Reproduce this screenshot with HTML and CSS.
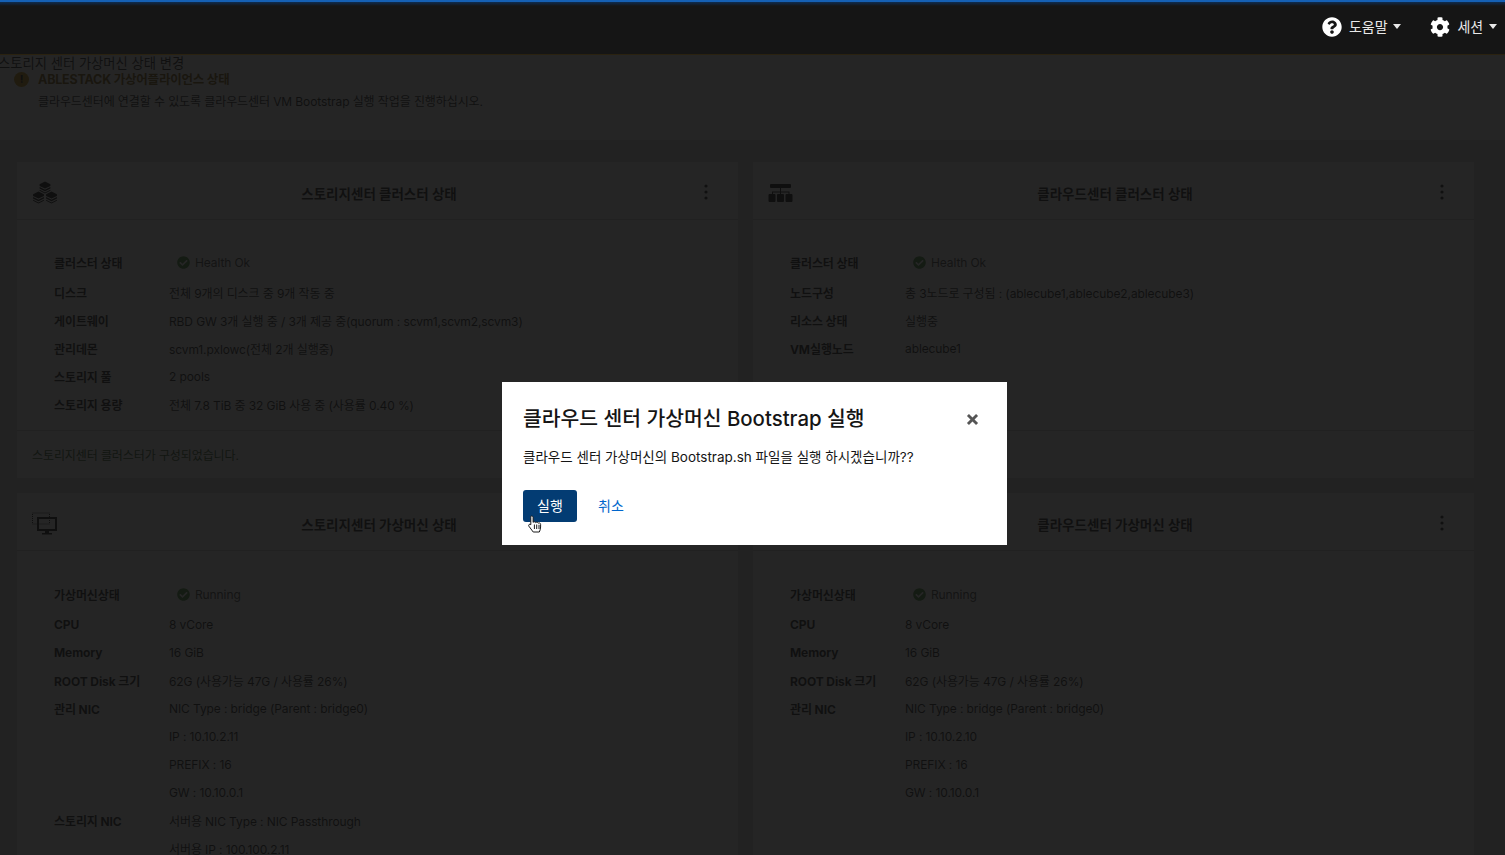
FILE: index.html
```html
<!DOCTYPE html>
<html lang="ko">
<head>
    <meta charset="UTF-8">
    <meta name="viewport" content="width=device-width, initial-scale=1.0">
    <title>ABLESTACK</title>
    <link rel="stylesheet" href="styles.css">
</head>
<body>
    <svg class="icon-defs" xmlns="http://www.w3.org/2000/svg">
        <symbol id="i-check" viewBox="0 0 512 512">
            <path d="M504 256c0 137-111 248-248 248S8 393 8 256 119 8 256 8s248 111 248 248zM227.3 387.3l184-184c6.200-6.200 6.200-16.400 0-22.600l-22.600-22.600c-6.200-6.200-16.400-6.200-22.600 0L216 308.100l-70.100-70.100c-6.200-6.200-16.400-6.200-22.600 0l-22.600 22.600c-6.200 6.200-6.200 16.400 0 22.600l104 104c6.200 6.200 16.400 6.200 22.600 0z"/>
        </symbol>
        <symbol id="i-kebab" viewBox="0 0 4 16">
            <circle cx="2" cy="2" r="1.600"/>
            <circle cx="2" cy="8" r="1.600"/>
            <circle cx="2" cy="14" r="1.600"/>
        </symbol>
        <symbol id="i-cube" viewBox="0 0 24 24">
            <path d="M12 1l10 5v3l-10 5L2 9V6z"/>
            <path d="M2 11l10 5 10-5v3l-10 5-10-5z"/>
            <path d="M2 16l10 5 10-5v2l-10 5-10-5z"/>
        </symbol>
    </svg>

    <header class="topbar">
        <div class="topbar-item">
            <svg class="topbar-icon" viewBox="0 0 512 512"><path d="M504 256c0 136.997-111.043 248-248 248S8 392.997 8 256C8 119.083 119.043 8 256 8s248 111.083 248 248zM262.655 90c-54.497 0-89.255 22.957-116.549 63.758-3.536 5.286-2.353 12.415 2.715 16.258l34.699 26.31c5.205 3.947 12.621 3.008 16.665-2.122 17.864-22.658 30.113-35.797 57.303-35.797 20.429 0 45.698 13.148 45.698 32.958 0 14.976-12.363 22.667-32.534 33.976C247.128 238.528 216 254.941 216 296v4c0 6.627 5.373 12 12 12h56c6.627 0 12-5.373 12-12v-1.333c0-28.462 83.186-29.647 83.186-106.667 0-58.002-60.165-102-116.531-102zM256 338c-25.365 0-46 20.635-46 46 0 25.364 20.635 46 46 46s46-20.636 46-46c0-25.365-20.635-46-46-46z"/></svg>
            <span>도움말</span>
            <i class="caret"></i>
        </div>
        <div class="topbar-item">
            <svg class="topbar-icon" viewBox="0 0 512 512"><path d="M487.4 315.7l-42.6-24.6c4.3-23.2 4.3-47 0-70.2l42.6-24.6c4.9-2.8 7.1-8.6 5.5-14-11.1-35.6-30-67.8-54.7-94.6-3.8-4.1-10-5.1-14.8-2.3L380.8 110c-17.900-15.400-38.500-27.300-60.800-35.100V25.800c0-5.600-3.900-10.500-9.400-11.700-36.700-8.200-74.300-7.800-109.200 0-5.500 1.200-9.400 6.100-9.400 11.700V75c-22.200 7.900-42.800 19.800-60.800 35.100L88.700 85.500c-4.900-2.800-11-1.900-14.800 2.300-24.700 26.700-43.600 58.900-54.700 94.600-1.700 5.400.6 11.200 5.500 14L67.300 221c-4.300 23.200-4.300 47 0 70.200l-42.600 24.600c-4.900 2.800-7.100 8.600-5.500 14 11.100 35.600 30 67.800 54.700 94.600 3.800 4.100 10 5.100 14.800 2.300l42.600-24.600c17.900 15.400 38.500 27.300 60.800 35.100v49.200c0 5.600 3.900 10.500 9.400 11.700 36.700 8.200 74.300 7.800 109.200 0 5.500-1.200 9.400-6.100 9.400-11.700v-49.200c22.200-7.900 42.800-19.800 60.800-35.100l42.600 24.600c4.900 2.800 11 1.900 14.800-2.300 24.700-26.700 43.600-58.900 54.700-94.600 1.500-5.500-.7-11.300-5.600-14.100zM256 336c-44.100 0-80-35.900-80-80s35.900-80 80-80 80 35.900 80 80-35.900 80-80 80z"/></svg>
            <span>세션</span>
            <i class="caret"></i>
        </div>
    </header>

    <main class="page">
        <section class="status-section">
            <div class="section-title">스토리지 센터 가상머신 상태 변경</div>
            <div class="alert">
                <span class="alert-icon">!</span>
                <div>
                    <div class="alert-title">ABLESTACK 가상어플라이언스 상태</div>
                    <div class="alert-desc">클라우드센터에 연결할 수 있도록 클라우드센터 VM Bootstrap 실행 작업을 진행하십시오.</div>
                </div>
            </div>
        </section>

        <section class="cards">
            <div class="card">
                <div class="card-head">
                    <svg class="card-icon" viewBox="0 0 26 24">
                        <use href="#i-cube" x="6.500" y="0" width="13" height="13"/>
                        <use href="#i-cube" x="0" y="10" width="13" height="13"/>
                        <use href="#i-cube" x="13" y="10" width="13" height="13"/>
                    </svg>
                    <h2>스토리지센터 클러스터 상태</h2>
                    <svg class="kebab"><use href="#i-kebab"/></svg>
                </div>
                <div class="card-body">
                    <div class="row row-status"><b>클러스터 상태</b><span class="status"><svg><use href="#i-check"/></svg>Health Ok</span></div>
                    <div class="row"><b>디스크</b><span>전체 9개의 디스크 중 9개 작동 중</span></div>
                    <div class="row"><b>게이트웨이</b><span>RBD GW 3개 실행 중 / 3개 제공 중(quorum : scvm1,scvm2,scvm3)</span></div>
                    <div class="row"><b>관리데몬</b><span>scvm1.pxlowc(전체 2개 실행중)</span></div>
                    <div class="row"><b>스토리지 풀</b><span>2 pools</span></div>
                    <div class="row"><b>스토리지 용량</b><span>전체 7.8 TiB 중 32 GiB 사용 중 (사용률 0.40 %)</span></div>
                </div>
                <div class="card-foot">스토리지센터 클러스터가 구성되었습니다.</div>
            </div>

            <div class="card">
                <div class="card-head">
                    <svg class="card-icon" viewBox="0 0 26 24">
                        <rect x="2" y="3" width="21" height="4" rx="1"/>
                        <path d="M12 7h1v3.500h8.500V14h-1v-2.500H13V14h-1v-2.500H5V14H4v-3.500h8z"/>
                        <rect x="0.500" y="13" width="7" height="8" rx="1"/>
                        <rect x="9" y="13" width="7" height="8" rx="1"/>
                        <rect x="17.500" y="13" width="7" height="8" rx="1"/>
                    </svg>
                    <h2>클라우드센터 클러스터 상태</h2>
                    <svg class="kebab"><use href="#i-kebab"/></svg>
                </div>
                <div class="card-body">
                    <div class="row row-status"><b>클러스터 상태</b><span class="status"><svg><use href="#i-check"/></svg>Health Ok</span></div>
                    <div class="row"><b>노드구성</b><span>총 3노드로 구성됨 : (ablecube1,ablecube2,ablecube3)</span></div>
                    <div class="row"><b>리소스 상태</b><span>실행중</span></div>
                    <div class="row"><b>VM실행노드</b><span>ablecube1</span></div>
                </div>
                <div class="card-foot"></div>
            </div>

            <div class="card">
                <div class="card-head">
                    <svg class="card-icon" viewBox="0 0 26 24">
                        <rect class="dotted" x="0.500" y="1" width="17" height="11"/>
                        <path fill-rule="evenodd" d="M5 5h20v14h-8v2h3v1.500H10V21h3v-2H5zM7 7v10h16V7z"/>
                    </svg>
                    <h2>스토리지센터 가상머신 상태</h2>
                    <svg class="kebab"><use href="#i-kebab"/></svg>
                </div>
                <div class="card-body">
                    <div class="row row-status row-status-vm"><b>가상머신상태</b><span class="status"><svg><use href="#i-check"/></svg>Running</span></div>
                    <div class="row"><b>CPU</b><span>8 vCore</span></div>
                    <div class="row"><b>Memory</b><span>16 GiB</span></div>
                    <div class="row"><b>ROOT Disk 크기</b><span>62G (사용가능 47G / 사용률 26%)</span></div>
                    <div class="row"><b>관리 NIC</b><span>NIC Type : bridge (Parent : bridge0)</span></div>
                    <div class="row"><b></b><span>IP : 10.10.2.11</span></div>
                    <div class="row"><b></b><span>PREFIX : 16</span></div>
                    <div class="row"><b></b><span>GW : 10.10.0.1</span></div>
                    <div class="row"><b>스토리지 NIC</b><span>서버용 NIC Type : NIC Passthrough</span></div>
                    <div class="row"><b></b><span>서버용 IP : 100.100.2.11</span></div>
                </div>
            </div>

            <div class="card">
                <div class="card-head">
                    <span class="card-icon"></span>
                    <h2>클라우드센터 가상머신 상태</h2>
                    <svg class="kebab"><use href="#i-kebab"/></svg>
                </div>
                <div class="card-body">
                    <div class="row row-status row-status-vm"><b>가상머신상태</b><span class="status"><svg><use href="#i-check"/></svg>Running</span></div>
                    <div class="row"><b>CPU</b><span>8 vCore</span></div>
                    <div class="row"><b>Memory</b><span>16 GiB</span></div>
                    <div class="row"><b>ROOT Disk 크기</b><span>62G (사용가능 47G / 사용률 26%)</span></div>
                    <div class="row"><b>관리 NIC</b><span>NIC Type : bridge (Parent : bridge0)</span></div>
                    <div class="row"><b></b><span>IP : 10.10.2.10</span></div>
                    <div class="row"><b></b><span>PREFIX : 16</span></div>
                    <div class="row"><b></b><span>GW : 10.10.0.1</span></div>
                </div>
            </div>
        </section>
    </main>

    <div class="backdrop"></div>

    <div class="modal">
        <div class="modal-head">
            <h1>클라우드 센터 가상머신 Bootstrap 실행</h1>
            <svg class="modal-close" viewBox="0 0 10 10"><path d="M1.500 1.500l7 7M8.500 1.500l-7 7"/></svg>
        </div>
        <p>클라우드 센터 가상머신의 Bootstrap.sh 파일을 실행 하시겠습니까??</p>
        <div class="modal-actions">
            <button class="btn-run">실행</button>
            <button class="btn-cancel">취소</button>
        </div>
        <svg class="pointer" viewBox="0 0 14 18">
            <path d="M3.500 1c1 0 1.600.7 1.600 1.600V7.400c.6-.9 2.300-.8 2.600.3.7-.8 2.200-.6 2.500.5.800-.6 2.400-.3 2.400 1.200V12c0 2-.6 3.500-1.300 5H5.200L.9 11.200c-.9-1.300.7-2.700 1.900-1.500V2.600c0-.9 0-1.600.7-1.600z"/>
            <path class="pointer-lines" d="M6.400 9.500v4.500M8.700 9.500v4.500M11 9.800v4.200"/>
        </svg>
    </div>
</body>
</html>
```

FILE: styles.css
```css
* {
    box-sizing: border-box;
}
html, body {
    height: 100%;
}
body {
    margin: 0;
    overflow: hidden;
    background-color: #d8d8d8;
    color: #151515;
    font-family: "Inter", "Noto Sans CJK KR", sans-serif;
    font-size: 12px;
    letter-spacing: -0.1px;
}
.icon-defs {
    display: none;
}

/* top bar stays above the backdrop */
.topbar {
    position: relative;
    z-index: 3;
    display: flex;
    justify-content: flex-end;
    align-items: center;
    gap: 29px;
    height: 55px;
    padding: 0 8px 3px 0;
    background: linear-gradient(#0e2c50, #151515 4px);
    border-top: 2px solid #1560b4;
    border-bottom: 1px solid #2a2210;
    color: #e8e8e8;
    font-size: 14px;
}
.topbar-item {
    display: flex;
    align-items: center;
}
.topbar-item span {
    margin-top: -2px;
}
.topbar-icon {
    width: 20px;
    height: 20px;
    margin-right: 7px;
    fill: #fff;
}
.caret {
    width: 0;
    height: 0;
    margin-left: 6px;
    border-left: 4.500px solid transparent;
    border-right: 4.500px solid transparent;
    border-top: 5px solid #e8e8e8;
}

.status-section {
    height: 85px;
    background-color: #fff;
}
.section-title {
    height: 16px;
    margin-left: -2px;
    font-size: 13.300px;
    line-height: 16px;
    letter-spacing: 0;
}
.alert {
    display: flex;
    gap: 9px;
    padding-left: 14px;
}
.alert-icon {
    flex: none;
    width: 15px;
    height: 15px;
    margin-top: 1px;
    border-radius: 50%;
    background-color: #c58c00;
    color: #000;
    font-size: 11px;
    font-weight: 700;
    line-height: 15px;
    text-align: center;
}
.alert-title {
    color: #795600;
    font-size: 12.500px;
    font-weight: 700;
    line-height: 17px;
    letter-spacing: -0.2px;
}
.alert-desc {
    margin-top: 5px;
    line-height: 17px;
}

.cards {
    display: grid;
    grid-template-columns: 721px 721px;
    grid-template-rows: 316px 400px;
    gap: 15px;
    padding: 22px 0 0 17px;
}
.card {
    display: flex;
    flex-direction: column;
    background-color: #fff;
}
.card-head {
    display: flex;
    align-items: center;
    height: 58px;
    padding: 4px 30px 0 15px;
    border-bottom: 1px solid #d2d2d2;
}
.card-head h2 {
    flex: 1;
    margin: 0;
    padding-right: 4px;
    font-size: 13.500px;
    font-weight: 700;
    letter-spacing: 0;
    text-align: center;
}
.card-icon {
    flex: none;
    width: 26px;
    height: 24px;
    fill: #000;
}
.dotted {
    fill: none;
    stroke: #000;
    stroke-width: 1;
    stroke-dasharray: 1 1;
}
.kebab {
    flex: none;
    width: 4px;
    height: 16px;
    margin-top: -2px;
    fill: #151515;
}
.card-body {
    flex: 1;
    padding: 23px 0 0 37px;
}
.row {
    display: flex;
    height: 28px;
    align-items: center;
}
.row b {
    flex: none;
    width: 115px;
    font-weight: 700;
}
.row-status {
    height: 31px;
    margin-top: 4px;
}
.row-status-vm {
    height: 32px;
}
.status {
    display: flex;
    align-items: center;
    margin-left: 8px;
    color: #3c3c3c;
}
.status svg {
    width: 13px;
    height: 13px;
    margin-right: 5px;
    fill: #3e8635;
}
.card-foot {
    height: 48px;
    padding: 16px 15px 0;
    border-top: 1px solid #d2d2d2;
    color: #1e4f18;
    line-height: 17px;
}

.backdrop {
    position: fixed;
    inset: 0;
    z-index: 1;
    background-color: rgba(16, 16, 16, 0.915);
}

.modal {
    position: absolute;
    top: 382px;
    left: 502px;
    z-index: 2;
    width: 505px;
    height: 163px;
    padding: 23px 21px;
    background-color: #fff;
    letter-spacing: 0;
}
.modal-head {
    display: flex;
    justify-content: space-between;
    align-items: center;
}
.modal-head h1 {
    margin: 0;
    font-size: 20.400px;
    font-weight: 500;
    line-height: 27px;
}
.modal-close {
    width: 13px;
    height: 13px;
    margin: 1px 7px 0 0;
    fill: none;
    stroke: #555;
    stroke-width: 2.200;
}
.modal p {
    margin: 15px 0 0;
    font-size: 13.500px;
    line-height: 20px;
}
.modal-actions {
    display: flex;
    align-items: center;
    gap: 21px;
    margin-top: 23px;
}
.modal-actions button {
    font-family: inherit;
    font-size: 14px;
    border: none;
    padding: 0 0 2px;
}
.btn-run {
    width: 54px;
    height: 32px;
    background-color: #033c73;
    border-radius: 3px;
    color: #fff;
}
.btn-cancel {
    background: none;
    color: #0066cc;
}
.pointer {
    position: absolute;
    top: 133px;
    left: 26px;
    width: 14px;
    height: 18px;
    fill: #fff;
    stroke: #1a1a1a;
    stroke-width: 1;
}
.pointer-lines {
    fill: none;
}
```
